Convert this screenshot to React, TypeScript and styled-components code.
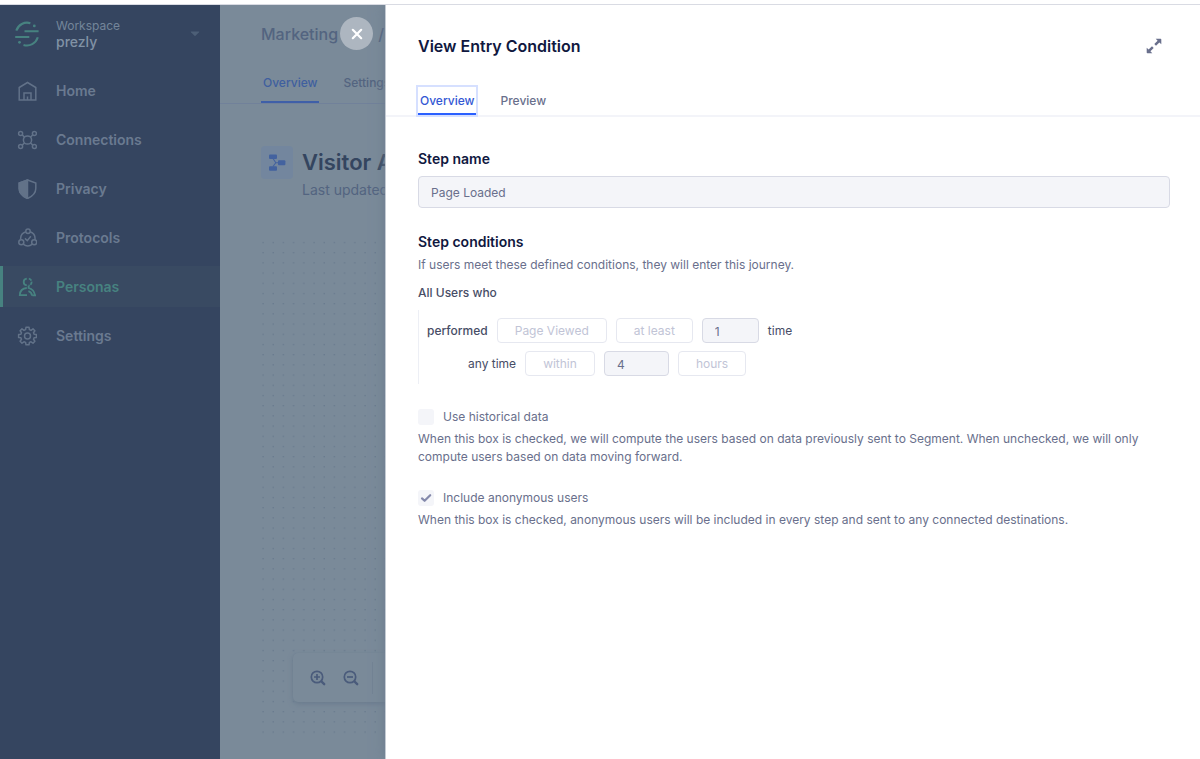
import React, { useState } from 'react';
import styled, { createGlobalStyle } from 'styled-components';

const GlobalStyle = createGlobalStyle`
  *, *::before, *::after { box-sizing: border-box; }
  body {
    margin: 0;
    background: #fff;
    font-family: Inter, "Liberation Sans", sans-serif;
    font-size: 12px;
    line-height: 18px;
    -webkit-font-smoothing: antialiased;
  }
  button, input { font: inherit; color: inherit; }
  h1, h2, h3, p { margin: 0; }
  a { color: inherit; text-decoration: none; }
`;

const Shell = styled.div`
  position: relative;
  display: flex;
  min-height: calc(100vh - 4px);
  margin-top: 4px;
  border-top: 1px solid #d9dbe3;
  overflow: hidden;
`;

/* ---------- Sidebar ---------- */

const Sidebar = styled.aside`
  flex: 0 0 220px;
  background: #354560;
  color: #6a7a90;
`;

const Workspace = styled.button`
  display: flex;
  align-items: center;
  gap: 16px;
  width: 100%;
  height: 65px;
  padding: 0 20px 8px 14px;
  border: 0;
  background: none;
  text-align: left;
`;

const WorkspaceText = styled.span`
  flex: 1;
  display: flex;
  flex-direction: column;
  line-height: 16px;
  color: #74859a;
`;

const WorkspaceName = styled.span`
  font-size: 14px;
  font-weight: 500;
  color: #8192a5;
`;

const Nav = styled.nav`
  display: flex;
  flex-direction: column;
  gap: 8px;
`;

const NavItem = styled.a<{ $active?: boolean }>`
  display: flex;
  align-items: center;
  gap: 19px;
  height: 41px;
  padding-left: 14px;
  border-left: 3px solid ${(p) => (p.$active ? '#478280' : 'transparent')};
  background: ${(p) => (p.$active ? '#394a62' : 'transparent')};
  color: ${(p) => (p.$active ? '#478280' : '#6a7a90')};
  font-size: 14px;
  font-weight: 600;

  svg { opacity: ${(p) => (p.$active ? 1 : 0.85)}; }
`;

/* ---------- Journey page ---------- */

const Main = styled.main`
  flex: 1;
  min-width: 0;
  display: flex;
  flex-direction: column;
  background: #7a8a99;
  color: #536480;
  white-space: nowrap;
`;

const Breadcrumb = styled.nav`
  display: flex;
  gap: 40px;
  padding: 17px 0 0 41px;
  font-size: 16px;
  font-weight: 500;
  line-height: 24px;
`;

const PageTabs = styled.div`
  display: flex;
  gap: 22px;
  margin-top: 25px;
  padding-left: 41px;
  border-bottom: 1px solid #71819a;
`;

const Tab = styled.button<{ $selected?: boolean; $muted?: boolean }>`
  height: ${(p) => (p.$muted ? 32 : 28)}px;
  padding: ${(p) => (p.$muted ? '0 2px 6px' : '2px 2px 0')};
  border: 0;
  border-bottom: 2px solid transparent;
  background: none;
  font-weight: 500;
  color: ${(p) => (p.$muted ? '#536480' : '#696f8c')};
  ${(p) => p.$selected && `color: ${p.$muted ? '#3f5f9f' : '#3358d4'}; border-bottom-color: ${p.$muted ? '#3f5fa8' : '#2b60ff'};`}
  ${(p) => p.$selected && !p.$muted && 'outline: 2px solid #d6e0ff;'}
`;

const PageHeading = styled.div`
  display: flex;
  gap: 9px;
  padding: 42px 0 0 41px;
`;

const JourneyBadge = styled.span`
  display: grid;
  place-items: center;
  width: 32px;
  height: 33px;
  border-radius: 4px;
  background: #73869e;
`;

const PageTitle = styled.h1`
  font-size: 22px;
  font-weight: 600;
  line-height: 32px;
  color: #34455f;
`;

const Updated = styled.p`
  margin-top: 2px;
  font-size: 14px;
  line-height: 20px;
`;

const Canvas = styled.section`
  position: relative;
  flex: 1;
  min-height: 240px;
  margin: 40px 0 22px 41px;
`;

const DotGrid = styled.svg`
  position: absolute;
  inset: 0;
  width: 100%;
  height: 100%;
`;

const ZoomBar = styled.div`
  position: absolute;
  left: 32px;
  bottom: 35px;
  display: flex;
  align-items: center;
  gap: 17px;
  width: 220px;
  height: 49px;
  padding-left: 17px;
  border-radius: 5px;
  background: #7a8a99;
  box-shadow: 0 2px 5px #6b7c8e, 0 0 1px #718192;
`;

const IconButton = styled.button`
  display: grid;
  place-items: center;
  padding: 0;
  border: 0;
  background: none;
  color: #4a5b7b;
`;

const ZoomDivider = styled.span`
  width: 1px;
  height: 32px;
  margin-left: -4px;
  background: #738393;
`;

/* ---------- Side sheet ---------- */

const CloseButton = styled.button`
  position: absolute;
  top: 12px;
  left: 340px;
  display: grid;
  place-items: center;
  width: 33px;
  height: 33px;
  padding: 0;
  border: 0;
  border-radius: 50%;
  background: #adb6c0;
  color: #fff;
`;

const Sheet = styled.section`
  position: absolute;
  inset: 0 0 0 385px;
  background: #fff;
  border-left: 1px solid #c4cbd3;
  box-shadow: 0 0 12px #6c7c8e;
  color: #696f8c;
`;

const SheetHeader = styled.header`
  display: flex;
  align-items: center;
  justify-content: space-between;
  padding: 25px 38px 0 32px;
`;

const SheetTitle = styled.h2`
  font-size: 16px;
  font-weight: 600;
  line-height: 32px;
  color: #101840;
`;

const SheetTabs = styled.div`
  display: flex;
  gap: 22px;
  margin-top: 25px;
  padding: 0 32px;
  border-bottom: 2px solid #f3f4f9;
`;

const SheetBody = styled.form`
  display: flex;
  flex-direction: column;
  align-items: stretch;
  padding: 32px 30px 32px 32px;
`;

const Heading = styled.h3`
  font-size: 14px;
  font-weight: 600;
  line-height: 20px;
  color: #101840;
`;

const HeadingLabel = styled(Heading).attrs({ as: 'label' })<{ htmlFor?: string }>``;

const TextInput = styled.input`
  height: 32px;
  margin: 7px 0 24px;
  padding: 0 12px;
  border: 1px solid #d8dae5;
  border-radius: 4px;
  background: #f4f5f9;
`;

const Hint = styled.p`
  margin-top: 4px;
`;

const ConditionTitle = styled.p`
  margin-top: 10px;
  font-weight: 500;
  color: #474d66;
`;

const Conditions = styled.div`
  display: flex;
  flex-direction: column;
  gap: 8px;
  margin: 8px 0 24px;
  padding: 8px 0 8px 8px;
  border-left: 1px solid #edeff5;
`;

const ConditionRow = styled.div<{ $indent?: boolean }>`
  display: flex;
  align-items: center;
  gap: 9px;
  padding-left: ${(p) => (p.$indent ? 41 : 0)}px;
  color: #474d66;
`;

const Word = styled.span<{ $strong?: boolean }>`
  font-weight: ${(p) => (p.$strong ? 500 : 400)};
`;

const Pill = styled.button`
  height: 25px;
  padding: 0 17px;
  border: 1px solid #e6e8f0;
  border-radius: 4px;
  background: #fff;
  color: #c1c4d6;
`;

const NumberInput = styled.input<{ $wide?: boolean }>`
  width: ${(p) => (p.$wide ? 65 : 57)}px;
  height: 25px;
  padding: 1px 12px 0;
  border: 1px solid #d8dae5;
  border-radius: 4px;
  background: #f4f5f9;
  color: #696f8c;
`;

const CheckLabel = styled.label`
  display: flex;
  align-items: center;
  gap: 9px;
  margin-bottom: 4px;
`;

const CheckCell = styled.span`
  display: grid;
  place-items: center;
  > * { grid-area: 1 / 1; }
  svg { pointer-events: none; visibility: hidden; }
  input:checked + svg { visibility: visible; }
`;

const CheckInput = styled.input`
  appearance: none;
  width: 16px;
  height: 16px;
  margin: 0;
  border-radius: 3px;
  background: #f4f5f9;
`;

const CheckHint = styled.p`
  margin-bottom: 23px;
`;

/* ---------- Icons ---------- */

const Glyph = ({ children }: { children: React.ReactNode }) => (
  <svg width="20" height="20" viewBox="0 0 20 20" fill="none" stroke="currentColor" strokeWidth="1.5" aria-hidden="true">
    {children}
  </svg>
);

const LogoIcon = () => (
  <svg width="26" height="26" viewBox="0 0 26 26" fill="none" stroke="#478280" strokeWidth="2.1" aria-hidden="true">
    <path d="M2.3 9.6A11.3 11.3 0 0 1 16.4 2.2" />
    <path d="M23.8 16.3A11.3 11.3 0 0 1 9.5 23.9" />
    <path d="M10.5 10.2H24.6M1.2 16H15.3" />
    <circle cx="20.3" cy="4.9" r="1.4" fill="#478280" stroke="none" />
    <circle cx="5.5" cy="21.3" r="1.4" fill="#478280" stroke="none" />
  </svg>
);

const HomeIcon = () => (
  <Glyph>
    <path d="M2.2 19V6.5L10.5 1.5L18.8 6.5V19Z" />
    <path d="M7 19V12H14V19M10.5 15.5V19" />
  </Glyph>
);

const ConnectionsIcon = () => (
  <Glyph>
    <circle cx="10.5" cy="10" r="4.1" />
    <circle cx="3.6" cy="3.4" r="2" />
    <circle cx="17.4" cy="3.4" r="2" />
    <circle cx="3.6" cy="16.6" r="2" />
    <circle cx="17.4" cy="16.6" r="2" />
    <path d="M5 4.8L7.6 7.1M16 4.8L13.4 7.1M5 15.2L7.6 12.9M16 15.2L13.4 12.9" />
  </Glyph>
);

const PrivacyIcon = () => (
  <Glyph>
    <path d="M10.5 1L18.8 4V9.5C18.8 14 15 17.5 10.5 19.5C6 17.5 2.2 14 2.2 9.5V4Z" />
    <path d="M10.5 1L2.2 4V9.5C2.2 14 6 17.5 10.5 19.5Z" fill="currentColor" />
  </Glyph>
);

const ProtocolsIcon = () => (
  <Glyph>
    <circle cx="11" cy="3.3" r="2.2" />
    <circle cx="4.3" cy="14.2" r="2.5" />
    <circle cx="17.2" cy="14.2" r="2.5" />
    <path d="M8.8 3.8A7.5 7.5 0 0 0 3.7 11.6M13.2 3.8A7.5 7.5 0 0 1 18 11.6M6.2 16.2A7.5 7.5 0 0 0 15.4 16.2" />
    <path d="M7.9 10.4L10.3 12.6L13.8 8.2" />
  </Glyph>
);

const PersonasIcon = () => (
  <Glyph>
    <path d="M9.8 1.6C7.7 1.9 6.7 3.2 6.7 5C6.7 6.8 7.7 8.1 9.8 8.4" strokeWidth="1.8" />
    <path d="M11.8 1.6C13.6 2 14.6 3.2 14.6 5C14.6 6.8 13.6 8 11.8 8.4" strokeWidth="1.8" strokeDasharray="3.4 1" />
    <path d="M9.8 11C5.6 11.2 3 13.6 2.8 18.2H10" strokeWidth="1.8" />
    <path d="M11.6 8.6V11C14 11.6 17.4 14 18 18.4M11.4 14.2C13.6 14.7 14.7 16.2 15.1 18.6M15.4 18.4H19" strokeWidth="1.8" />
  </Glyph>
);

const SettingsIcon = () => (
  <Glyph>
    <circle cx="10.5" cy="10" r="3" />
    <path
      strokeLinejoin="round"
      d="M9 1.2H12L12.4 3.6L14 4.3L16 2.9L17.9 4.8L16.5 6.8L17.1 8.3L19.4 8.6V11.4L17.1 11.8L16.5 13.3L17.9 15.3L16 17.2L14 15.8L12.4 16.4L12 18.8H9L8.6 16.4L7 15.8L5 17.2L3.1 15.3L4.5 13.3L3.9 11.8L1.6 11.4V8.6L3.9 8.3L4.5 6.8L3.1 4.8L5 2.9L7 4.3L8.6 3.6Z"
    />
  </Glyph>
);

const CaretIcon = () => (
  <svg width="10" height="6" viewBox="0 0 10 6" fill="#4d5f77" aria-hidden="true">
    <path d="M1 0.5H9Q9.6 0.5 9 1.2L5.5 4.8Q5 5.3 4.5 4.8L1 1.2Q0.4 0.5 1 0.5Z" />
  </svg>
);

const JourneyIcon = () => (
  <svg width="18" height="18" viewBox="0 0 18 18" fill="#43629f" aria-hidden="true">
    <rect x="1" y="0.5" width="8" height="4.4" rx="1" />
    <rect x="1" y="12.3" width="8" height="4.4" rx="1" />
    <rect x="10" y="6.2" width="7.4" height="5" rx="1" />
    <path d="M5 4.5L7.8 8.7M5 12.5L7.8 8.7H11" fill="none" stroke="#43629f" strokeWidth="1.1" />
  </svg>
);

const MagnifierIcon = ({ plus }: { plus?: boolean }) => (
  <svg width="16" height="16" viewBox="0 0 16 16" fill="none" stroke="currentColor" strokeWidth="1.7" aria-hidden="true">
    <circle cx="7" cy="7" r="5.7" />
    <path d="M11.5 11.5L14.2 14.2" strokeWidth="2.4" strokeLinecap="round" />
    <path d={plus ? 'M4 7H10M7 4V10' : 'M4 7H10'} />
  </svg>
);

const ExpandIcon = () => (
  <svg width="16" height="16" viewBox="0 0 16 16" fill="#696f8c" aria-hidden="true">
    <path d="M9.7 0.8H14.6Q15.3 0.8 15.3 1.5V6.3L13.4 4.6L10 7.8L8.3 6.1L11.6 2.8Z" />
    <path d="M6.3 15.2H1.4Q0.7 15.2 0.7 14.5V9.7L2.6 11.4L6 8.2L7.7 9.9L4.4 13.2Z" />
  </svg>
);

const CrossIcon = () => (
  <svg width="12" height="12" viewBox="0 0 12 12" stroke="currentColor" strokeWidth="2.2" strokeLinecap="round" aria-hidden="true">
    <path d="M1.8 1.8L10.2 10.2M10.2 1.8L1.8 10.2" />
  </svg>
);

const CheckIcon = () => (
  <svg width="12" height="10" viewBox="0 0 12 10" fill="none" stroke="#8489ab" strokeWidth="2.2" strokeLinecap="round" strokeLinejoin="round" aria-hidden="true">
    <path d="M2 5.4L4.6 7.8L10.2 2.2" />
  </svg>
);

/* ---------- Page ---------- */

const navItems = [
  { label: 'Home', Icon: HomeIcon },
  { label: 'Connections', Icon: ConnectionsIcon },
  { label: 'Privacy', Icon: PrivacyIcon },
  { label: 'Protocols', Icon: ProtocolsIcon },
  { label: 'Personas', Icon: PersonasIcon, active: true },
  { label: 'Settings', Icon: SettingsIcon },
];

function CheckField(props: { label: string; hint: string; initial: boolean }) {
  const [checked, setChecked] = useState(props.initial);
  return (
    <>
      <CheckLabel>
        <CheckCell>
          <CheckInput type="checkbox" checked={checked} onChange={(e) => setChecked(e.target.checked)} />
          <CheckIcon />
        </CheckCell>
        {props.label}
      </CheckLabel>
      <CheckHint>{props.hint}</CheckHint>
    </>
  );
}

export default function App() {
  return (
    <>
      <GlobalStyle />
      <Shell>
        <Sidebar>
          <Workspace type="button">
            <LogoIcon />
            <WorkspaceText>
              Workspace
              <WorkspaceName>prezly</WorkspaceName>
            </WorkspaceText>
            <CaretIcon />
          </Workspace>
          <Nav aria-label="Workspace">
            {navItems.map(({ label, Icon, active }) => (
              <NavItem key={label} href="#" $active={active}>
                <Icon />
                {label}
              </NavItem>
            ))}
          </Nav>
        </Sidebar>

        <Main>
          <Breadcrumb aria-label="Breadcrumb">
            <a href="#">Marketing</a>
            <span>/</span>
          </Breadcrumb>
          <PageTabs role="tablist">
            <Tab type="button" role="tab" aria-selected $selected $muted>Overview</Tab>
            <Tab type="button" role="tab" $muted>Settings</Tab>
          </PageTabs>
          <PageHeading>
            <JourneyBadge><JourneyIcon /></JourneyBadge>
            <div>
              <PageTitle>Visitor A</PageTitle>
              <Updated>Last updated</Updated>
            </div>
          </PageHeading>
          <Canvas>
            <DotGrid aria-hidden="true">
              <defs>
                <pattern id="dots" width="10.2" height="10.2" patternUnits="userSpaceOnUse">
                  <circle cx="2" cy="2.6" r="0.7" fill="#64768b" />
                </pattern>
              </defs>
              <rect width="100%" height="100%" fill="url(#dots)" />
            </DotGrid>
            <ZoomBar>
              <IconButton type="button" aria-label="Zoom in"><MagnifierIcon plus /></IconButton>
              <IconButton type="button" aria-label="Zoom out"><MagnifierIcon /></IconButton>
              <ZoomDivider />
            </ZoomBar>
          </Canvas>
        </Main>

        <Sheet aria-label="View Entry Condition">
          <SheetHeader>
            <SheetTitle>View Entry Condition</SheetTitle>
            <IconButton type="button" aria-label="Expand"><ExpandIcon /></IconButton>
          </SheetHeader>
          <SheetTabs role="tablist">
            <Tab type="button" role="tab" aria-selected $selected>Overview</Tab>
            <Tab type="button" role="tab">Preview</Tab>
          </SheetTabs>
          <SheetBody>
            <HeadingLabel htmlFor="step-name">Step name</HeadingLabel>
            <TextInput id="step-name" defaultValue="Page Loaded" readOnly />
            <Heading>Step conditions</Heading>
            <Hint>If users meet these defined conditions, they will enter this journey.</Hint>
            <ConditionTitle>All Users who</ConditionTitle>
            <Conditions>
              <ConditionRow>
                <Word $strong>performed</Word>
                <Pill type="button" disabled>Page Viewed</Pill>
                <Pill type="button" disabled>at least</Pill>
                <NumberInput aria-label="Event count" defaultValue="1" readOnly />
                <Word>time</Word>
              </ConditionRow>
              <ConditionRow $indent>
                <Word>any time</Word>
                <Pill type="button" disabled>within</Pill>
                <NumberInput aria-label="Hours" defaultValue="4" readOnly $wide />
                <Pill type="button" disabled>hours</Pill>
              </ConditionRow>
            </Conditions>
            <CheckField
              initial={false}
              label="Use historical data"
              hint="When this box is checked, we will compute the users based on data previously sent to Segment. When unchecked, we will only compute users based on data moving forward."
            />
            <CheckField
              initial
              label="Include anonymous users"
              hint="When this box is checked, anonymous users will be included in every step and sent to any connected destinations."
            />
          </SheetBody>
        </Sheet>
        <CloseButton type="button" aria-label="Close"><CrossIcon /></CloseButton>
      </Shell>
    </>
  );
}
